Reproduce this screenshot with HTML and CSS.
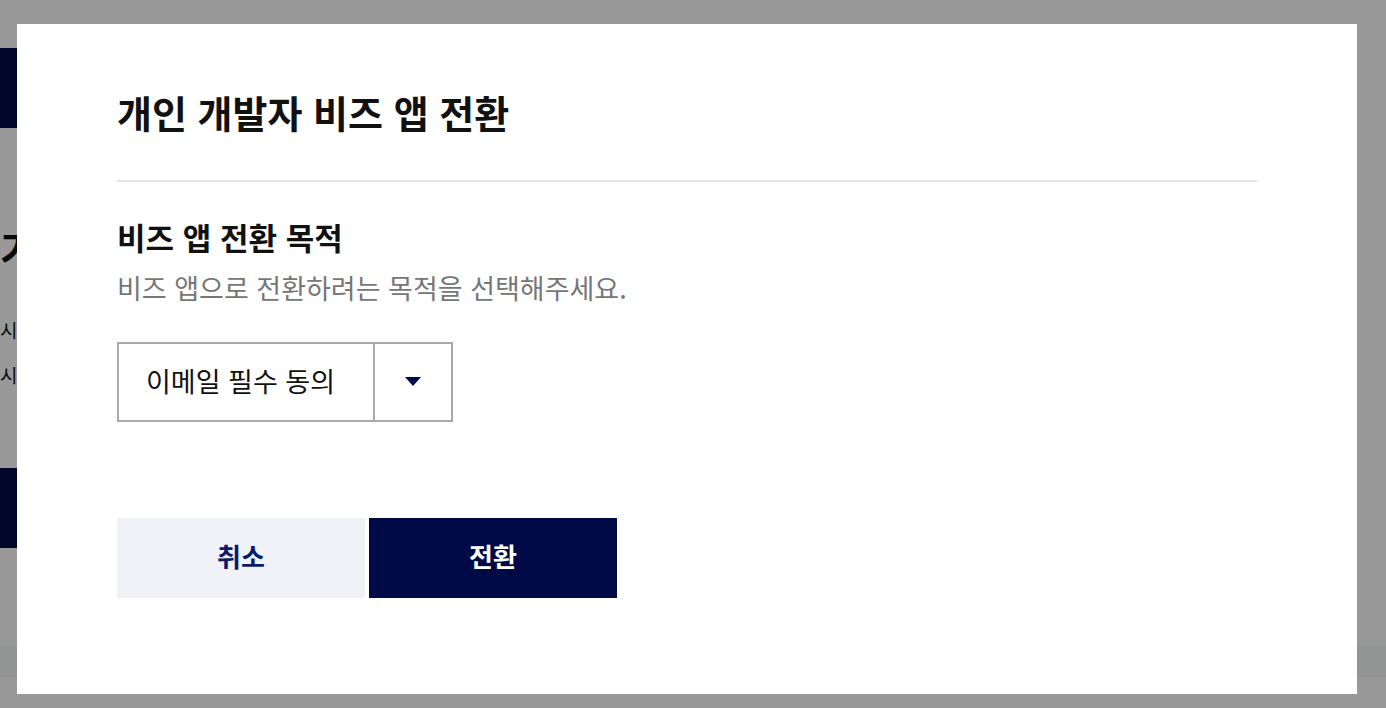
FILE: index.html
```html
<!DOCTYPE html>
<html lang="ko">
<head>
<meta charset="utf-8">
<title>개인 개발자 비즈 앱 전환</title>
<link rel="stylesheet" href="styles.css">
</head>
<body>
<div class="page">
  <div class="page-bar"></div>
  <h2 class="page-heading">기간</h2>
  <p class="page-line">시간</p>
  <p class="page-line">시작</p>
  <div class="page-button"></div>
  <div class="page-strip"></div>
</div>

<div class="overlay">
  <div class="modal" role="dialog" aria-labelledby="modal-title">
    <header class="modal-header">
      <h1 id="modal-title" class="modal-title">개인 개발자 비즈 앱 전환</h1>
    </header>
    <section class="modal-section">
      <h2 class="section-title">비즈 앱 전환 목적</h2>
      <p class="section-desc">비즈 앱으로 전환하려는 목적을 선택해주세요.</p>
      <div class="select">
        <span class="select-value">이메일 필수 동의</span>
        <span class="select-toggle">
          <svg width="16" height="10" viewBox="0 0 16 10" aria-hidden="true"><path d="M0 0H16L8 9Z" fill="#000a46"/></svg>
        </span>
      </div>
    </section>
    <div class="modal-actions">
      <button class="btn btn-cancel" type="button">취소</button>
      <button class="btn btn-confirm" type="button">전환</button>
    </div>
  </div>
</div>
</body>
</html>
```

FILE: styles.css
```css
* { box-sizing: border-box; }

html, body {
  margin: 0;
  padding: 0;
  height: 100%;
}

body {
  font-family: "Noto Sans CJK KR", "Noto Sans", sans-serif;
  background: #ffffff;
  color: #111111;
  overflow: hidden;
}

/* background page (mostly hidden behind the overlay) */
.page {
  display: flex;
  flex-direction: column;
  align-items: flex-start;
  padding-top: 48px;
}

.page-bar {
  width: 400px;
  height: 80px;
  background: #020b46;
}

.page-heading {
  margin: 96px 0 0;
  font-size: 40px;
  font-weight: 700;
  line-height: 48px;
  white-space: nowrap;
}

.page-line {
  margin: 0;
  font-size: 19px;
  line-height: 45px;
  white-space: nowrap;
}
.page-line:first-of-type { margin-top: 35px; }

.page-button {
  margin-top: 71px;
  width: 400px;
  height: 80px;
  background: #020b46;
}

.page-strip {
  margin-top: 97px;
  width: 100vw;
  height: 32px;
  background: #f5f9f8;
}

/* overlay + modal */
.overlay {
  position: fixed;
  inset: 0;
  background: rgba(0, 0, 0, 0.4);
  display: flex;
  align-items: flex-start;
  padding: 24px 0 0 17px;
}

.modal {
  width: 1340px;
  height: 670px;
  background: #ffffff;
  padding: 64px 100px 0;
  display: flex;
  flex-direction: column;
}

.modal-header {
  border-bottom: 2px solid #e4e4e4;
  padding-bottom: 44px;
}

.modal-title {
  margin: 0;
  font-size: 38px;
  font-weight: 700;
  line-height: 48px;
  color: #111111;
}

.modal-section {
  padding-top: 36px;
  display: flex;
  flex-direction: column;
  align-items: flex-start;
}

.section-title {
  margin: 0;
  font-size: 31px;
  font-weight: 700;
  line-height: 38px;
  color: #111111;
}

.section-desc {
  margin: 16px 0 0;
  font-size: 27px;
  font-weight: 400;
  line-height: 32px;
  color: #767676;
}

.select {
  margin-top: 38px;
  width: 336px;
  height: 80px;
  border: 2px solid #a9a9a9;
  display: flex;
  align-items: stretch;
}

.select-value {
  flex: 1;
  display: flex;
  align-items: center;
  padding: 0 0 3px 27px;
  font-size: 27px;
  color: #111111;
  border-right: 2px solid #a9a9a9;
}

.select-toggle {
  width: 76px;
  display: flex;
  align-items: center;
  justify-content: center;
}

.modal-actions {
  margin-top: 96px;
  display: flex;
  gap: 4px;
}

.btn {
  width: 248px;
  height: 80px;
  border: 0;
  margin: 0;
  padding: 0 0 5px;
  font-family: inherit;
  font-size: 26px;
  font-weight: 700;
  cursor: pointer;
}

.btn-cancel {
  background: #f1f2f8;
  color: #0b1a6b;
}

.btn-confirm {
  background: #000a46;
  color: #ffffff;
}
```
